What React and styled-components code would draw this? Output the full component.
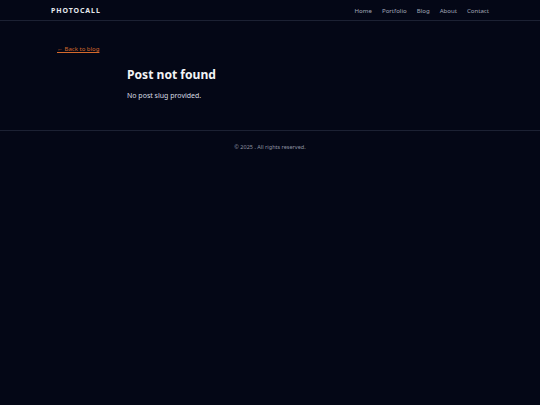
import React from "react";
import styled, { createGlobalStyle } from "styled-components";

const Global = createGlobalStyle`
  html, body { margin: 0; padding: 0; background: #040716; }
  body { font-family: "Noto Sans", "Open Sans", sans-serif; color: #e5e7eb; min-height: 405px; }
  * { box-sizing: border-box; }
`;

const Header = styled.header`
  border-bottom: 1px solid #1c2133;
`;

const HeaderInner = styled.div`
  max-width: 438px;
  margin: 0 auto;
  height: 20px;
  display: flex;
  align-items: center;
  justify-content: space-between;
`;

const Logo = styled.div`
  font-size: 7px;
  font-weight: 700;
  letter-spacing: 0.9px;
  color: #e5e7eb;
`;

const Nav = styled.nav`
  display: flex;
  gap: 10px;
`;

const NavLink = styled.a`
  font-size: 6.1px;
  color: #a3a8b8;
  text-decoration: none;
`;

const Main = styled.main`
  max-width: 426px;
  margin: 0 auto;
  padding: 13px 0 29px;
`;

const BackLink = styled.a`
  display: inline-block;
  font-size: 6px;
  color: #d5692c;
  text-decoration: underline;
  line-height: 9px;
`;

const Article = styled.article`
  max-width: 286px;
  margin: 10px auto 0;
`;

const Title = styled.h1`
  margin: 0;
  font-size: 12.1px;
  font-weight: 700;
  color: #f3f4f6;
  line-height: 18px;
`;

const Text = styled.p`
  margin: 7px 0 0;
  font-size: 7px;
  color: #d8dbe2;
  line-height: 10px;
`;

const Footer = styled.footer`
  border-top: 1px solid #1c2133;
  padding: 12px 0;
  text-align: center;
`;

const Copy = styled.p`
  margin: 0;
  font-size: 5.5px;
  color: #8e93a3;
  line-height: 8px;
`;

export default function App() {
  return (
    <>
      <Global />
      <Header>
        <HeaderInner>
          <Logo>PHOTOCALL</Logo>
          <Nav>
            <NavLink href="#">Home</NavLink>
            <NavLink href="#">Portfolio</NavLink>
            <NavLink href="#">Blog</NavLink>
            <NavLink href="#">About</NavLink>
            <NavLink href="#">Contact</NavLink>
          </Nav>
        </HeaderInner>
      </Header>
      <Main>
        <BackLink href="#">← Back to blog</BackLink>
        <Article>
          <Title>Post not found</Title>
          <Text>No post slug provided.</Text>
        </Article>
      </Main>
      <Footer>
        <Copy>© 2025 . All rights reserved.</Copy>
      </Footer>
    </>
  );
}
